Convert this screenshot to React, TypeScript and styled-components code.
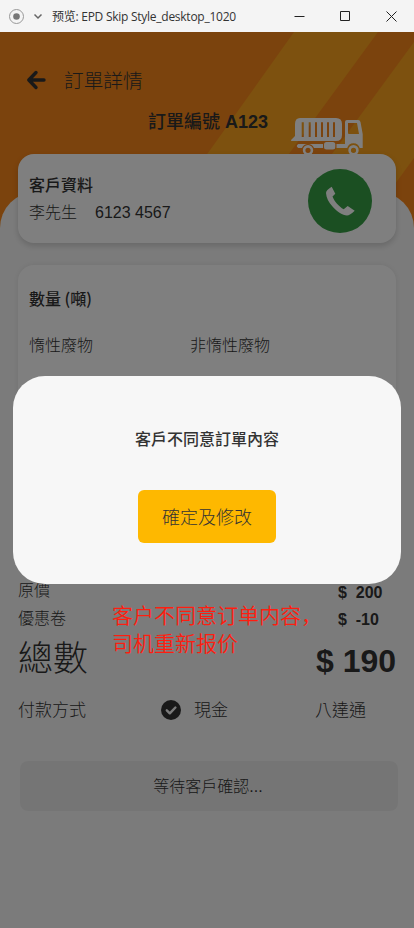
import React from "react";
import styled, { createGlobalStyle } from "styled-components";

const Global = createGlobalStyle`
  * { box-sizing: border-box; }
  body { margin: 0; background: #f7f7f7; }
`;

const sans = `"Liberation Sans", "Noto Sans CJK TC", sans-serif`;

const Window = styled.div`
  width: 414px;
  height: 928px;
  overflow: hidden;
  display: flex;
  flex-direction: column;
  font-family: ${sans};
  font-weight: 300;
  color: #333;
`;

const TitleBar = styled.div`
  height: 32px;
  flex: none;
  display: flex;
  align-items: center;
  padding: 0 17px 0 9px;
  background: #f4f4f4;
`;

const WindowTitle = styled.span`
  flex: 1;
  margin-left: 9px;
  padding-top: 1px;
  font: 400 12px/32px "Open Sans", "Noto Sans CJK SC", sans-serif;
  letter-spacing: -0.26px;
  color: #333;
  white-space: nowrap;
`;

const WindowControls = styled.div`
  display: flex;
  align-items: center;
  gap: 35px;
`;

const Screen = styled.main`
  position: relative;
  height: 896px;
  background: #f7861a;
  isolation: isolate;
`;

const Stripes = styled.svg`
  position: absolute;
  inset: 0;
  z-index: -1;
`;

const Hero = styled.header`
  height: 160px;
  padding-top: 34px;
`;

const NavRow = styled.div`
  height: 28px;
  display: flex;
  align-items: center;
  padding-left: 26px;
  gap: 18px;
`;

const NavTitle = styled.h1`
  margin: 0;
  padding-top: 1px;
  font-size: 19.7px;
  font-weight: 300;
  line-height: 28px;
`;

const OrderRow = styled.div`
  display: grid;
  grid-template-columns: 148px 143px 72px;
  align-items: start;
  padding-top: 14px;
`;

const OrderNumber = styled.h2`
  grid-column: 2;
  margin: 0;
  font-size: 18px;
  font-weight: 500;
  line-height: 28px;
  white-space: nowrap;
`;

const OrderCode = styled.span`
  font-weight: 700;
`;

const Truck = styled.svg`
  margin-top: 10px;
  display: block;
`;

const Sheet = styled.div`
  height: 736px;
  border-radius: 36px 36px 0 0;
  background: #f7f7f7;
  display: flow-root;
`;

const Card = styled.section<{ $height: number; $top: number; $shadow: string }>`
  height: ${(p) => p.$height}px;
  margin: ${(p) => p.$top}px 18px 0;
  padding: 0 24px 0 11px;
  background: #fff;
  border-radius: 16px;
  box-shadow: ${(p) => p.$shadow};
`;

const CustomerRow = styled.div`
  height: 100%;
  display: flex;
  justify-content: space-between;
  padding-top: 15px;
`;

const CardHeading = styled.h3`
  margin: 0;
  font-family: "Noto Sans CJK TC", sans-serif;
  font-size: 16px;
  line-height: 31px;
  font-weight: 500;
`;

const Contact = styled.div`
  display: flex;
  gap: 18px;
  font-size: 16px;
  line-height: 24px;
  margin-top: 1px;
`;

const CallButton = styled.button`
  width: 64px;
  height: 64px;
  padding: 0;
  border: 0;
  border-radius: 50%;
  background: #369e45;
  display: grid;
  place-items: center;
`;

const QuantityBody = styled.div`
  padding-top: 18px;
`;

const QuantityColumns = styled.div`
  display: grid;
  grid-template-columns: 161px 1fr;
  margin-top: 20px;
  font-size: 16px;
  line-height: 24px;
`;

const Summary = styled.section`
  margin-top: 10px;
  padding: 0 18px;
`;

const AmountRow = styled.div<{ $height: number }>`
  height: ${(p) => p.$height}px;
  display: grid;
  grid-template-columns: 320px 1fr;
  align-items: center;
  font-size: 16px;
`;

const Amount = styled.span<{ $drop: number }>`
  font-weight: 700;
  white-space: pre;
  padding-top: ${(p) => p.$drop}px;
`;

const TotalRow = styled.div`
  height: 52px;
  display: grid;
  grid-template-columns: 298px 1fr;
  align-items: center;
  font-size: 35px;
  line-height: 54px;
`;

const TotalAmount = styled.span`
  font-size: 32px;
  font-weight: 700;
  white-space: nowrap;
  padding-top: 4px;
  line-height: 52px;
`;

const PaymentRow = styled.div`
  display: grid;
  grid-template-columns: 143px 33px 121px 1fr;
  align-items: center;
  height: 50px;
  font-size: 17px;

  svg {
    margin-top: 4px;
  }
`;

const WaitingButton = styled.button`
  display: block;
  width: 378px;
  height: 50px;
  margin: 28px 0 0 20px;
  padding: 2px 2px 0 0;
  border: 0;
  border-radius: 8px;
  background: #ebebeb;
  color: #333;
  font: 300 16px/48px ${sans};
  text-align: center;
`;

const Overlay = styled.div`
  position: absolute;
  inset: 0;
  background: rgba(0, 0, 0, 0.5);
  padding: 344px 13px 0;
`;

const Dialog = styled.div`
  height: 208px;
  border-radius: 32px;
  background: #f7f7f7;
  display: flex;
  flex-direction: column;
  align-items: center;
  padding-top: 52px;
`;

const DialogTitle = styled.h2`
  margin: 0 0 38px;
  font-size: 16px;
  font-weight: 500;
  line-height: 24px;
`;

const ConfirmButton = styled.button`
  width: 138px;
  height: 53px;
  padding: 3px 0 0;
  border: 0;
  border-radius: 6px;
  background: #feb800;
  color: #333;
  font: 300 18px/50px ${sans};
`;

const Note = styled.p`
  margin: 16px 0 0 99px;
  width: 230px;
  font: 350 21px/28px "Noto Sans CJK SC", sans-serif;
  color: #ff1d0f;
  white-space: nowrap;
`;

export default function App() {
  return (
    <Window>
      <Global />
      <TitleBar>
        <svg width="34" height="16" viewBox="0 0 34 16" fill="none">
          <circle cx="7.5" cy="8.5" r="7" stroke="#999" />
          <circle cx="7.5" cy="8.5" r="3.3" fill="#777" />
          <path d="M25.5 6.5l3.5 3.5 3.5-3.5" stroke="#666" strokeWidth="1.5" />
        </svg>
        <WindowTitle>预览: EPD Skip Style_desktop_1020</WindowTitle>
        <WindowControls>
          <svg width="11" height="11" viewBox="0 0 11 11">
            <path d="M0.5 5.5h10" stroke="#222" />
          </svg>
          <svg width="11" height="11" viewBox="0 0 11 11">
            <path d="M.5.5h9v9h-9z" fill="none" stroke="#222" />
          </svg>
          <svg width="11" height="11" viewBox="0 0 11 11">
            <path d="M.5.5l10 10m0-10l-10 10" stroke="#222" />
          </svg>
        </WindowControls>
      </TitleBar>

      <Screen>
        <Stripes width="414" height="240" viewBox="0 0 414 240">
          <path d="M294 0h84L226 208h-80z" fill="#faa21e" />
          <path d="M414 10v116L360 200h-60l32-78z" fill="#faa21e" />
        </Stripes>

        <Hero>
          <NavRow>
            <svg width="20" height="20" viewBox="0 0 20 20" fill="none">
              <path
                d="M10 2.500L2.800 10l7.200 7.500M3.200 10H18"
                stroke="#333"
                strokeWidth="3.4"
                strokeLinecap="round"
                strokeLinejoin="round"
              />
            </svg>
            <NavTitle>訂單詳情</NavTitle>
          </NavRow>
          <OrderRow>
            <OrderNumber>
              訂單編號 <OrderCode>A123</OrderCode>
            </OrderNumber>
            <Truck width="72" height="38" viewBox="0 0 72 38">
              <path
                fill="#fff"
                fillRule="evenodd"
                d="M9 0h36q6 0 6 6v11q0 6-6 6H.5q-1-.5 0-1.500L4 18V6q0-6 5-6zM10.700 4.300v14.700h2.100V4.300zm7 0v14.700h2V4.300zm6.300 0v14.700h2V4.300zm6 0v14.700h2V4.300zm6 0v14.700h2V4.300zm6 0v14.700h2V4.300z"
              />
              <path
                fill="#fff"
                fillRule="evenodd"
                d="M56 2h11q2 0 2.500 2l2.200 12v14h-3a6.500 6.500 0 0 0-12.500 0H45.500v-4H54V4q0-2 2-2zm1 3v10q0 1 1 1h10L66 5z"
              />
              <path fill="#fff" d="M7.300 26H32v4H23a6.500 6.500 0 0 0-12 0H7.300q-3-2 0-4z" />
              <rect x="33" y="24" width="11.300" height="7.400" rx="2.500" fill="#fff" />
              <circle cx="17" cy="32.300" r="3.900" fill="none" stroke="#fff" strokeWidth="2.600" />
              <circle cx="62.500" cy="32.300" r="3.900" fill="none" stroke="#fff" strokeWidth="2.600" />
            </Truck>
          </OrderRow>
        </Hero>

        <Sheet>
          <Card $height={89} $top={-38} $shadow="0 3px 6px rgba(0, 0, 0, 0.16)">
            <CustomerRow>
              <div>
                <CardHeading>客戶資料</CardHeading>
                <Contact>
                  <span>李先生</span>
                  <span>6123 4567</span>
                </Contact>
              </div>
              <CallButton aria-label="call">
                <svg width="32" height="32" viewBox="0 0 32 32">
                  <path
                    fill="#fff"
                    d="M7.700 1.700Q2 5.200 2 8C2.300 13 4.500 17 8.500 21.500c5 5.500 10 8.800 14.500 9q2.800 0 7.700-4.800L23.700 21l-4 3.300C15 21.500 10.300 16.500 8.500 11.500L11.300 8.800z"
                  />
                </svg>
              </CallButton>
            </CustomerRow>
          </Card>

          <Card $height={300} $top={22} $shadow="0 0 6px rgba(0, 0, 0, 0.08)">
            <QuantityBody>
              <CardHeading>數量 (噸)</CardHeading>
              <QuantityColumns>
                <span>惰性廢物</span>
                <span>非惰性廢物</span>
              </QuantityColumns>
            </QuantityBody>
          </Card>

          <Summary>
            <AmountRow $height={28}>
              <span>原價</span>
              <Amount $drop={7}>{"$  200"}</Amount>
            </AmountRow>
            <AmountRow $height={28}>
              <span>優惠卷</span>
              <Amount $drop={5}>{"$  -10"}</Amount>
            </AmountRow>
            <TotalRow>
              <span>總數</span>
              <TotalAmount>$ 190</TotalAmount>
            </TotalRow>
            <PaymentRow>
              <span>付款方式</span>
              <svg width="20" height="20" viewBox="0 0 20 20">
                <circle cx="10" cy="10" r="10" fill="#333" />
                <path
                  d="M5.800 10.300l3 3 5.600-5.800"
                  fill="none"
                  stroke="#f7f7f7"
                  strokeWidth="2.400"
                  strokeLinecap="round"
                  strokeLinejoin="round"
                />
              </svg>
              <span>現金</span>
              <span>八達通</span>
            </PaymentRow>
          </Summary>
          <WaitingButton>等待客戶確認...</WaitingButton>
        </Sheet>

        <Overlay>
          <Dialog>
            <DialogTitle>客戶不同意訂單內容</DialogTitle>
            <ConfirmButton>確定及修改</ConfirmButton>
          </Dialog>
          <Note>
            客户不同意订单内容，
            <br />
            司机重新报价
          </Note>
        </Overlay>
      </Screen>
    </Window>
  );
}
